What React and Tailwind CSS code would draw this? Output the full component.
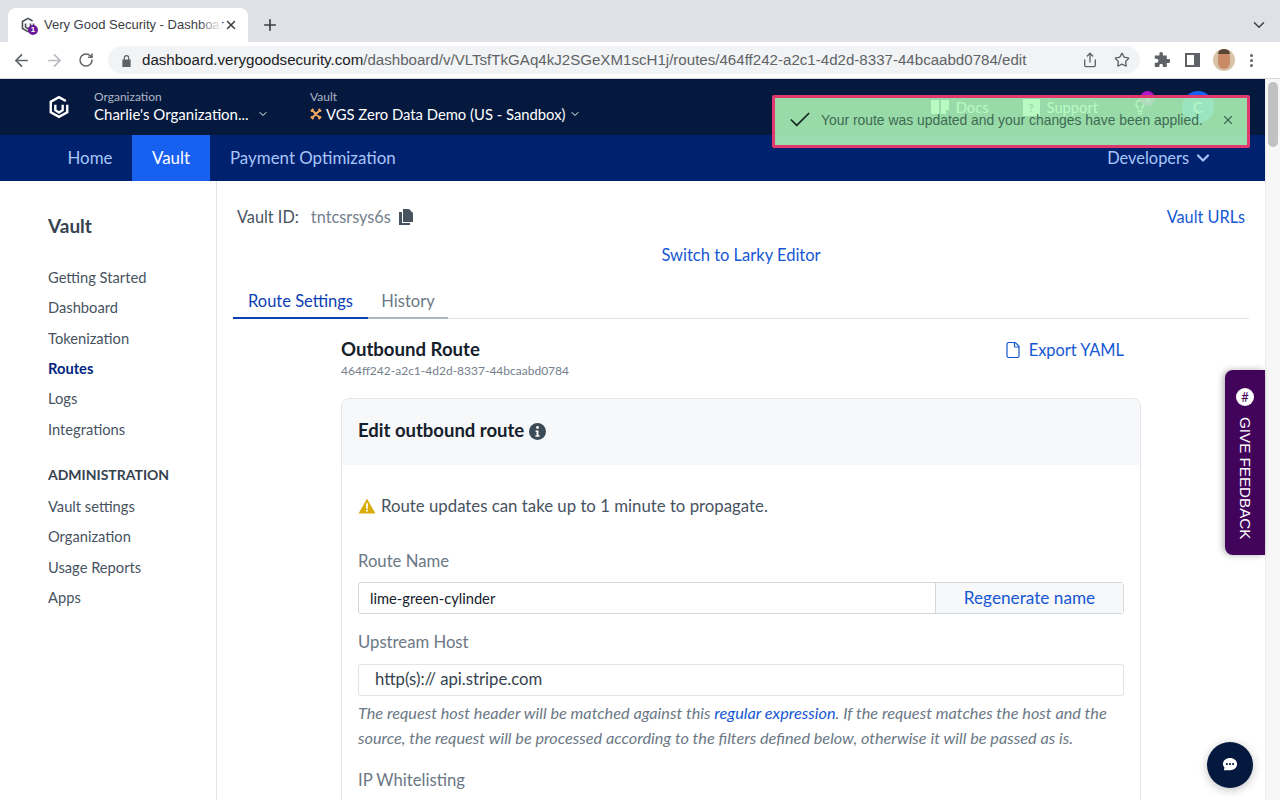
import React from "react";
import {
  ArrowLeft,
  ArrowRight,
  RotateCw,
  Star,
  ChevronDown,
  Plus,
  X,
  Check,
  Lightbulb,
  Share,
  File,
} from "lucide-react";

const FONT = "font-['Lato','Noto_Sans',sans-serif]";

const sideLinks = ["Getting Started", "Dashboard", "Tokenization", "Routes", "Logs", "Integrations"];
const adminLinks = ["Vault settings", "Organization", "Usage Reports", "Apps"];

const VgsLogo = ({ className }) => (
  <svg viewBox="0 0 24 26" className={className} fill="none" stroke="currentColor" strokeWidth="2.6">
    <path d="M19.500 6.500 12 2.200 3 7.300v11.400l9 5.100 9-5.100v-8.200" />
    <path d="M8 10.500v6l4 2.600 4-2.600v-6" />
  </svg>
);

const BrowserChrome = () => (
  <div className="h-[79px] shrink-0 bg-white border-b border-[#d5d7db] font-['Liberation_Sans',sans-serif]">
    <div className="h-[42px] bg-[#dee1e6] flex items-end pl-2 pr-3">
      <div className="relative w-[240px] h-[34px] bg-white rounded-t-lg flex items-center pl-3 pr-2.5 gap-2">
        <div className="relative w-4 h-4 shrink-0 text-[#4a4f57]">
          <VgsLogo className="w-4 h-4" />
          <span className="absolute -right-[2px] -bottom-[2px] w-[10px] h-[10px] rounded-full bg-[#6a1b9a] text-white text-[8px] leading-[10px] text-center font-bold">1</span>
        </div>
        <span className="flex-1 min-w-0 text-[13px] text-[#3c4043] whitespace-nowrap">Very Good Security - Dashboar</span>
        <div className="absolute left-[190px] top-0 w-6 h-full bg-gradient-to-r from-white/0 to-white" />
        <X className="relative w-3.5 h-3.5 text-[#3c4043] shrink-0" strokeWidth={2.5} />
      </div>
      <Plus className="w-[18px] h-[18px] text-[#3c4043] ml-[13px] mb-2" strokeWidth={2.2} />
      <ChevronDown className="w-[18px] h-[18px] text-[#3c4043] ml-auto mb-2" />
    </div>
    <div className="h-9 flex items-center pl-3 pr-2">
      <ArrowLeft className="w-[19px] h-[19px] text-[#5f6368]" strokeWidth={2.2} />
      <ArrowRight className="w-[19px] h-[19px] text-[#b8bbbf] ml-[14px]" strokeWidth={2.2} />
      <RotateCw className="w-4 h-4 text-[#5f6368] ml-[14px]" strokeWidth={2.2} />
      <div className="ml-[14px] w-[1032px] h-7 rounded-full bg-[#f1f3f4] flex items-center pl-[13px] pr-[10px]">
        <svg viewBox="0 0 12 14" className="w-[11px] h-[13px] shrink-0" fill="#5f6368">
          <path d="M3 6V4a3 3 0 0 1 6 0v2h1.500v8h-9V6zm1.300 0h3.400V4a1.700 1.700 0 0 0-3.400 0z" />
        </svg>
        <span className="ml-[10px] whitespace-nowrap text-[15.1px]">
          <span className="text-[#202124]">dashboard.verygoodsecurity.com</span>
          <span className="text-[#5f6368]">/dashboard/v/VLTsfTkGAq4kJ2SGeXM1scH1j/routes/464ff242-a2c1-4d2d-8337-44bcaabd0784/edit</span>
        </span>
        <Share className="w-4 h-4 text-[#5f6368] ml-auto" />
        <Star className="w-4 h-4 text-[#5f6368] ml-4" />
      </div>
      <svg viewBox="0 0 24 24" className="w-[17px] h-[17px] ml-[13px]" fill="#5f6368">
        <path d="M9 2.500a2.500 2.500 0 0 1 5 0V5h5.500v5H22a2.700 2.700 0 0 1 0 5.400h-2.500V21H14v-2a2.500 2.500 0 0 0-5 0v2H2.500v-6H5a2.700 2.700 0 0 0 0-5.400H2.500V5H9z" />
      </svg>
      <div className="w-[15px] h-[14px] border-2 border-[#5f6368] ml-[15px] flex justify-end">
        <div className="w-[4px] h-full bg-[#5f6368]" />
      </div>
      <div className="relative w-[22px] h-[22px] rounded-full bg-[#d9c3a8] ml-[13px] overflow-hidden">
        <div className="absolute left-[5px] top-[2px] w-3 h-[18px] rounded-full bg-[#c98a68]" />
        <div className="absolute left-[5px] top-0 w-3 h-[5px] rounded-t-full bg-[#5a4536]" />
      </div>
      <div className="ml-[15px] flex flex-col gap-[2px]">
        <span className="w-[3px] h-[3px] rounded-full bg-[#5f6368]" />
        <span className="w-[3px] h-[3px] rounded-full bg-[#5f6368]" />
        <span className="w-[3px] h-[3px] rounded-full bg-[#5f6368]" />
      </div>
    </div>
  </div>
);

const TopBar = () => (
  <div className="h-14 bg-[#05193f] flex items-center pl-12 pr-[51px] shrink-0">
    <VgsLogo className="w-[22px] h-6 text-white" />
    <div className="ml-6 w-[216px] pb-[3px]">
      <div className="text-xs leading-4 text-[#aeb6c6]">Organization</div>
      <div className="flex items-center text-[15px] leading-[18px] text-white">
        Charlie's Organization...
        <ChevronDown className="w-3 h-3 ml-2" />
      </div>
    </div>
    <div className="pb-[3px]">
      <div className="text-xs leading-4 text-[#aeb6c6]">Vault</div>
      <div className="flex items-center text-[14.8px] leading-[18px] text-white">
        <svg viewBox="0 0 14 14" className="w-3 h-3 mr-1 shrink-0" fill="none" stroke="#f5a860" strokeWidth="2.200">
          <path d="M2 2l10 10M12 2 2 12M1 4l3-3M10 1l3 3M1 10l3 3M10 13l3-3" />
        </svg>
        VGS Zero Data Demo (US - Sandbox)
        <ChevronDown className="w-3 h-3 ml-1" />
      </div>
    </div>
    <div className="ml-auto flex items-center text-[14.7px] text-white">
      <svg viewBox="0 0 18 16" className="w-[18px] h-4 mr-[7px]" fill="white">
        <path d="M0 1h8v14H0zM10 1h8v10h-3v4h-5z" />
      </svg>
      Docs
      <div className="ml-[34px] mr-[7px] w-[17px] h-[17px] bg-white text-[#05193f] text-[12px] leading-[17px] text-center font-bold">?</div>
      Support
      <div className="relative ml-[34px]">
        <Lightbulb className="w-4 h-4 text-white" />
        <span className="absolute left-[8px] -top-[8px] w-[15px] h-[15px] rounded-full bg-[#b116c8] text-[9px] leading-[15px] text-center">1</span>
      </div>
      <div className="w-8 h-8 rounded-full bg-[#1760f0] ml-[34px] flex items-center justify-center text-white">C</div>
    </div>
  </div>
);

const NavBar = () => (
  <div className="h-[46px] bg-[#00216e] flex pl-12 pr-[52px] text-[16.9px] text-[#a8c6fb] shrink-0">
    <div className="w-[84px] flex items-center justify-center">Home</div>
    <div className="w-[78px] flex items-center justify-center bg-[#1760f0] text-white">Vault</div>
    <div className="flex items-center ml-5">Payment Optimization</div>
    <div className="ml-auto flex items-center text-[16.4px]">
      Developers
      <ChevronDown className="w-5 h-5 ml-1" strokeWidth={2.6} />
    </div>
  </div>
);

const Sidebar = () => (
  <aside className="w-[217px] shrink-0 border-r border-[#e1e4e8] pl-12 pt-[33px] text-[#47535f]">
    <div className="text-[19px] font-bold leading-6 text-[#36434f]">Vault</div>
    <div className="mt-[24px] flex flex-col text-[14.7px]">
      {sideLinks.map((link) => (
        <a key={link} className={`h-[30.3px] flex items-center ${link === "Routes" ? "font-bold text-[#00267f]" : ""}`}>
          {link}
        </a>
      ))}
    </div>
    <div className="mt-[19px] text-sm font-bold leading-6 text-[#36434f]">ADMINISTRATION</div>
    <div className="mt-[4px] flex flex-col text-[14.7px]">
      {adminLinks.map((link) => (
        <a key={link} className="h-[30.3px] flex items-center">{link}</a>
      ))}
    </div>
  </aside>
);

const Field = ({ label, className = "", children }) => (
  <div className={className}>
    <div className="text-[16.7px] leading-5 text-[#6b7885]">{label}</div>
    {children}
  </div>
);

const RouteForm = () => (
  <div className="mt-[19px] border border-[#e3e6ea] rounded-t-lg">
    <div className="h-[66px] pb-[2px] bg-[#f6f8fa] rounded-t-lg flex items-center px-4">
      <h2 className="text-[18.5px] font-bold text-[#15202b]">Edit outbound route</h2>
      <svg viewBox="0 0 18 18" className="w-[17px] h-[17px] ml-[5px]">
        <circle cx="9" cy="9" r="9" fill="#3b4a57" />
        <circle cx="9" cy="4.800" r="1.500" fill="white" />
        <path d="M7 8h3v5h1.200v1.500H6.800V13H8V9.500H7z" fill="white" />
      </svg>
    </div>
    <div className="px-4 pt-[29px] pb-10">
      <div className="flex items-center text-[16.8px] leading-6 text-[#47535f]">
        <svg viewBox="0 0 20 18" className="w-[18px] h-4 mr-[5px] shrink-0">
          <path d="M10 0.500 19.500 17.500H0.500z" fill="#d9ac0b" />
          <path d="M9 6h2v6H9zM9 13.200h2v2H9z" fill="white" />
        </svg>
        Route updates can take up to 1 minute to propagate.
      </div>
      <Field label="Route Name" className="mt-[33px]">
        <div className="mt-[11px] h-8 flex border border-[#d4d8dc] rounded-[3px] text-[14.7px]">
          <div className="flex-1 flex items-center pl-[11px] text-[#15202b]">lime-green-cylinder</div>
          <div className="w-[188px] bg-[#f7f8fa] border-l border-[#d4d8dc] flex items-center justify-center text-[17.2px] text-[#1557d4]">
            Regenerate name
          </div>
        </div>
      </Field>
      <Field label="Upstream Host" className="mt-[18px]">
        <div className="mt-[12px] h-8 flex items-center border border-[#e0e3e7] rounded-[3px] pl-4 text-[16.7px] text-[#36434f]">
          http(s):// api.stripe.com
        </div>
      </Field>
      <p className="mt-[4px] text-[16.25px] leading-[25px] italic text-[#6b7885] whitespace-nowrap">
        The request host header will be matched against this{" "}
        <a className="text-[#1557d4]">regular expression</a>. If the request matches the host and the
        <br />
        source, the request will be processed according to the filters defined below, otherwise it will be passed as is.
      </p>
      <Field label="IP Whitelisting" className="mt-[20px]" />
    </div>
  </div>
);

const Main = () => (
  <main className="flex-1 min-w-0 pl-4 pr-4 pt-[24px]">
    <div className="flex items-center h-6 pl-1 pr-1 text-[16.3px]">
      <span className="text-[#47535f]">Vault ID:</span>
      <span className="ml-3 text-[#74808c]">tntcsrsys6s</span>
      <svg viewBox="0 0 14 16" className="w-[14px] h-4 ml-2" fill="#47535f">
        <path d="M4 0h6l4 4v9H4z" />
        <path d="M0 3h3v11h8v2H0z" />
      </svg>
      <a className="ml-auto text-[#1557d4]">Vault URLs</a>
    </div>
    <div className="mt-[14px] h-6 flex items-center justify-center text-[16.5px] text-[#1557d4]">Switch to Larky Editor</div>
    <div className="mt-[22px] h-[30px] flex border-b border-[#e1e4e8] text-[16.5px]">
      <div className="w-[135px] h-[30px] pb-[4px] flex items-center justify-center border-b-2 border-[#0b40b5] text-[#0b40b5]">Route Settings</div>
      <div className="w-[80px] h-[30px] pb-[4px] flex items-center justify-center border-b-2 border-[#aeb6c2] text-[#6b7885]">History</div>
    </div>
    <div className="w-[800px] ml-[108px] mt-[18px]">
      <div className="flex items-start">
        <div>
          <h1 className="text-[18.6px] font-bold leading-6 text-[#15202b]">Outbound Route</h1>
          <div className="mt-[2px] text-[12px] leading-4 text-[#74808c]">464ff242-a2c1-4d2d-8337-44bcaabd0784</div>
        </div>
        <a className="ml-auto mr-[17px] mt-[1px] flex items-center h-6 text-[16.4px] text-[#1557d4]">
          <File className="w-[18px] h-[18px] mr-[7px]" strokeWidth={1.6} />
          Export YAML
        </a>
      </div>
      <RouteForm />
    </div>
  </main>
);

const Toast = () => (
  <div className="absolute left-[772px] top-[95px] w-[478px] h-[53px] pb-[3px] bg-[#aff8b9]/[0.87] border-[3px] border-[#e0386f] rounded-[2px] flex items-center pl-3 pr-3 text-[13.9px] text-[#3f6a52] font-['Liberation_Sans',sans-serif]">
    <Check className="w-[26px] h-[26px] text-[#16281f] shrink-0" strokeWidth={1.6} />
    <span className="ml-[8px] whitespace-nowrap">Your route was updated and your changes have been applied.</span>
    <X className="w-3.5 h-3.5 ml-auto text-[#3f6a52]" />
  </div>
);

const Feedback = () => (
  <div className="absolute left-[1225px] top-[370px] w-10 h-[185px] bg-[#42045a] rounded-l-lg shadow-[-2px_0_6px_rgba(0,0,0,0.3)] flex flex-col items-center pt-[18px] text-white">
    <div className="w-[18px] h-[18px] rounded-full bg-white text-[#42045a] text-[13px] leading-[18px] text-center shrink-0">#</div>
    <div className="mt-[11px] text-[15.2px] leading-none whitespace-nowrap font-['Liberation_Sans',sans-serif] [writing-mode:vertical-rl]">GIVE FEEDBACK</div>
  </div>
);

const ChatButton = () => (
  <div className="absolute left-[1207px] top-[742px] w-[46px] h-[46px] rounded-full bg-[#05193f] shadow-[0_2px_10px_rgba(0,0,0,0.25)] flex items-center justify-center">
    <svg viewBox="0 0 18 18" className="w-4 h-4">
      <path d="M9 1c4.400 0 8 2.900 8 7s-3.600 7-8 7H2l.8-3.200C1.700 10.600 1 9.400 1 8c0-4.100 3.600-7 8-7z" fill="white" />
      <circle cx="5.500" cy="8" r="1.200" fill="#05193f" />
      <circle cx="9" cy="8" r="1.200" fill="#05193f" />
      <circle cx="12.500" cy="8" r="1.200" fill="#05193f" />
    </svg>
  </div>
);

const App = () => (
  <div className={`relative w-[1280px] h-[800px] overflow-hidden bg-white flex flex-col ${FONT}`}>
    <BrowserChrome />
    <div className="flex flex-1 min-h-0">
      <div className="flex-1 min-w-0 flex flex-col">
        <TopBar />
        <NavBar />
        <div className="flex flex-1 min-h-0 overflow-hidden">
          <Sidebar />
          <Main />
        </div>
      </div>
      <div className="w-[15px] shrink-0 bg-[#f7f7f7] border-l border-[#ececec] pt-[3px] pl-[2px]">
        <div className="w-[10px] h-[65px] rounded-full bg-[#c1c1c1]" />
      </div>
    </div>
    <Toast />
    <Feedback />
    <ChatButton />
  </div>
);

export default App;
